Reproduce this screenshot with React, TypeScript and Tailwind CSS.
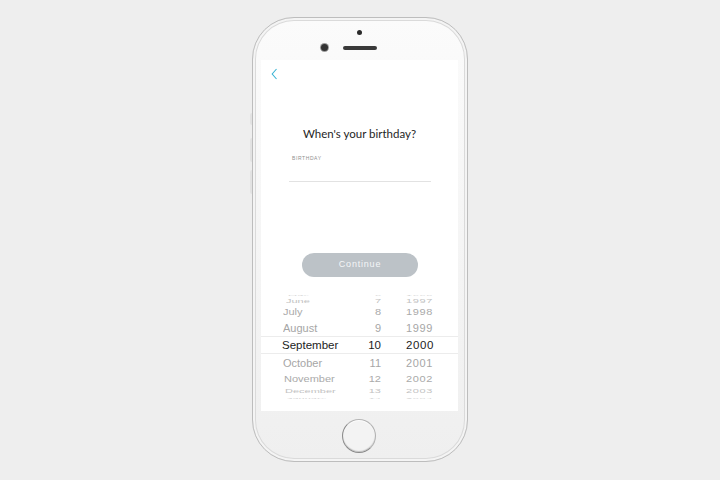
import React from "react";

type Row = { m: string; d: string; y: string; h: number; s: number; c: string; sel?: boolean; mx: number };

const rows: Row[] = [
  { m: "May", d: "6", y: "1996", h: 5, s: 0.2, c: "#d4d4d4", mx: 27 },
  { m: "June", d: "7", y: "1997", h: 8, s: 0.45, c: "#c2c2c2", mx: 25 },
  { m: "July", d: "8", y: "1998", h: 14, s: 0.8, c: "#aaaaaa", mx: 22 },
  { m: "August", d: "9", y: "1999", h: 17, s: 0.95, c: "#a6a6a6", mx: 22 },
  { m: "September", d: "10", y: "2000", h: 18, s: 1, c: "#1c1c1c", sel: true, mx: 21 },
  { m: "October", d: "11", y: "2001", h: 17, s: 0.95, c: "#a6a6a6", mx: 22 },
  { m: "November", d: "12", y: "2002", h: 15, s: 0.8, c: "#aaaaaa", mx: 23 },
  { m: "December", d: "13", y: "2003", h: 9, s: 0.45, c: "#c2c2c2", mx: 24 },
  { m: "January", d: "14", y: "2004", h: 5, s: 0.2, c: "#d4d4d4", mx: 26 },
];

function PickerRow({ r }: { r: Row }) {
  const size = r.sel ? "text-[11.5px]" : "text-[11px]";
  return (
    <div className={`flex items-center overflow-visible ${r.sel ? "border-y border-[#ececec]" : ""}`} style={{ height: r.h }}>
      <div className={`flex w-full h-[14px] shrink-0 leading-[14px] ${size}`} style={{ transform: `scaleY(${r.s})`, color: r.c }}>
        <div className="w-[100px] shrink-0" style={{ paddingLeft: r.mx }}>{r.m}</div>
        <div className="w-[20px] shrink-0 text-right">{r.d}</div>
        <div className="ml-[25px] tracking-[0.6px]">{r.y}</div>
      </div>
    </div>
  );
}

export default function App() {
  return (
    <div className="w-[720px] h-[480px] bg-[#eeeeee] flex justify-center pt-[17px]" style={{ fontFamily: "'Liberation Sans', Arial, sans-serif" }}>
      <div className="w-[216px] h-[445px] rounded-[42px] border border-[#bdbdbd] bg-gradient-to-b from-[#fbfbfb] to-[#efefef] shadow-[inset_0_0_0_2px_#f4f4f4,inset_0_0_0_3px_#dadada] flex flex-col items-center relative ml-[-1px]">
        {/* top bezel */}
        <div className="h-[42px] w-full flex flex-col items-center pt-[12px]">
          <div className="w-[5px] h-[5px] rounded-full bg-[#2a2a2a]" />
          <div className="mt-[9px] flex items-center gap-[15px] ml-[-22px]">
            <div className="w-[7px] h-[7px] rounded-full bg-[#333] shadow-[0_0_0_1px_#9a9a9a]" />
            <div className="w-[34px] h-[4px] rounded-full bg-[#3a3a3a]" />
          </div>
        </div>
        {/* screen */}
        <div className="w-[197px] h-[351px] bg-white flex flex-col">
          <div className="pl-[10px] pt-[8px] h-[20px]">
            <svg width="7" height="12" viewBox="0 0 7 12">
              <path d="M5.5 1 L1.2 6 L5.5 11" fill="none" stroke="#3ab4d4" strokeWidth="1.1" />
            </svg>
          </div>
          <div className="mt-[47px] h-[14px] text-center text-[11.5px] leading-[14px] text-[#1e1e1e] font-normal" style={{ fontFamily: "Lato, 'Liberation Sans', sans-serif" }}>
            When's your birthday?
          </div>
          <div className="mt-[14px] ml-[31px] h-[6px] text-[5px] leading-[6px] tracking-[0.6px] text-[#8f8f8f]">BIRTHDAY</div>
          <div className="mt-[20px] ml-[28px] w-[142px] h-[1px] bg-[#e2e2e2]" />
          <div className="mt-[71px] ml-[41px] w-[116px] h-[24px] rounded-full bg-[#bcc2c7] flex items-center justify-center text-[#f4f6f7] text-[9px] tracking-[0.8px]">
            Continue
          </div>
          {/* picker */}
          <div className="mt-[15px] flex flex-col px-0">
            {rows.map((r, i) => (
              <PickerRow key={i} r={r} />
            ))}
          </div>
        </div>
        {/* bottom bezel */}
        <div className="flex-1 w-full flex items-center justify-center">
          <div className="w-[34px] h-[34px] rounded-full border-[1.5px] border-[#8a8a8a] border-t-[#b5b5b5] border-r-[#b0b0b0] bg-[#f3f3f3] shadow-[inset_0_-1px_1px_rgba(0,0,0,0.2),inset_0_1px_1px_rgba(255,255,255,0.9)] -mt-[1px] ml-[-2px]" />
        </div>
        {/* side buttons */}
        <div className="absolute left-[-3px] top-[95px] w-[2px] h-[12px] bg-[#e2e2e2] rounded-l" />
        <div className="absolute left-[-3px] top-[120px] w-[2px] h-[24px] bg-[#e2e2e2] rounded-l" />
        <div className="absolute left-[-3px] top-[152px] w-[2px] h-[24px] bg-[#e2e2e2] rounded-l" />
      </div>
    </div>
  );
}
